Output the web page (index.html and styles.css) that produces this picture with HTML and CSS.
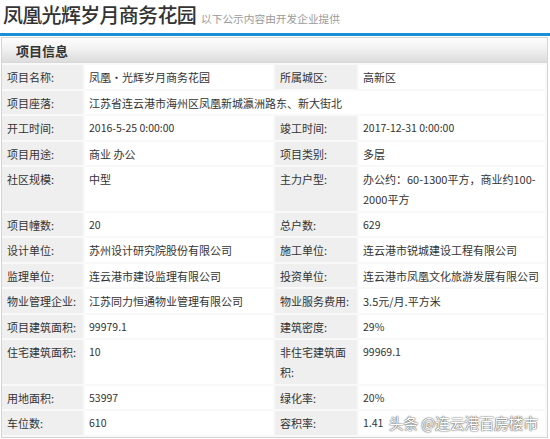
FILE: index.html
```html
<!DOCTYPE html>
<html lang="zh-CN">
<head>
<meta charset="utf-8">
<title>凤凰光辉岁月商务花园</title>
<link rel="stylesheet" href="styles.css">
</head>
<body>
<div class="page">
  <div class="title-bar">
    <h1 class="title">凤凰光辉岁月商务花园</h1>
    <span class="subtitle">以下公示内容由开发企业提供</span>
  </div>
  <div class="rule"></div>
  <div class="panel">
    <div class="panel-head">项目信息</div>
    <div class="grid">
      <div class="lbl">项目名称:</div><div class="val">凤凰・光辉岁月商务花园</div>
      <div class="lbl">所属城区:</div><div class="val">高新区</div>

      <div class="lbl">项目座落:</div><div class="val span3">江苏省连云港市海州区凤凰新城瀛洲路东、新大街北</div>

      <div class="lbl">开工时间:</div><div class="val num">2016-5-25 0:00:00</div>
      <div class="lbl">竣工时间:</div><div class="val num">2017-12-31 0:00:00</div>

      <div class="lbl">项目用途:</div><div class="val">商业 办公</div>
      <div class="lbl">项目类别:</div><div class="val">多层</div>

      <div class="lbl">社区规模:</div><div class="val">中型</div>
      <div class="lbl">主力户型:</div><div class="val">办公约：60-1300平方，商业约100-<br>2000平方</div>

      <div class="lbl">项目幢数:</div><div class="val num">20</div>
      <div class="lbl">总户数:</div><div class="val num">629</div>

      <div class="lbl">设计单位:</div><div class="val">苏州设计研究院股份有限公司</div>
      <div class="lbl">施工单位:</div><div class="val">连云港市锐城建设工程有限公司</div>

      <div class="lbl">监理单位:</div><div class="val">连云港市建设监理有限公司</div>
      <div class="lbl">投资单位:</div><div class="val">连云港市凤凰文化旅游发展有限公司</div>

      <div class="lbl">物业管理企业:</div><div class="val">江苏同力恒通物业管理有限公司</div>
      <div class="lbl">物业服务费用:</div><div class="val">3.5元/月.平方米</div>

      <div class="lbl">项目建筑面积:</div><div class="val num">99979.1</div>
      <div class="lbl">建筑密度:</div><div class="val num">29%</div>

      <div class="lbl">住宅建筑面积:</div><div class="val num">10</div>
      <div class="lbl">非住宅建筑面积:</div><div class="val num">99969.1</div>

      <div class="lbl">用地面积:</div><div class="val num">53997</div>
      <div class="lbl">绿化率:</div><div class="val num">20%</div>

      <div class="lbl">车位数:</div><div class="val num">610</div>
      <div class="lbl">容积率:</div><div class="val num">1.41</div>
    </div>
  </div>
  <div class="watermark">头条 @连云港百房楼市</div>
</div>
</body>
</html>
```
FILE: styles.css
```css
html, body {
  margin: 0;
  padding: 0;
  background: #ffffff;
}

.page {
  position: relative;
  width: 550px;
  height: 439px;
  overflow: hidden;
  font-family: "Noto Sans CJK SC", "Noto Sans", sans-serif;
  color: #333333;
}

.title-bar {
  display: flex;
  align-items: baseline;
  height: 33px;
  padding-left: 3px;
  box-sizing: border-box;
}

.title {
  margin: 0;
  font-size: 20px;
  line-height: 30px;
  font-weight: 500;
  color: #333333;
  letter-spacing: -0.7px;
}

.subtitle {
  margin-left: 5px;
  font-size: 10.7px;
  color: #9a9a9a;
}

.rule {
  height: 3px;
  background: #1a8fd6;
  margin-bottom: 1px;
}

.panel {
  margin-left: 1px;
  width: 547px;
  box-sizing: border-box;
  border: 1px solid #d4d4d4;
  background: #f9f9f9;
}

.panel-head {
  height: 25px;
  line-height: 25px;
  padding-left: 14px;
  font-size: 13px;
  font-weight: 700;
  color: #333333;
  background: linear-gradient(#fdfdfd, #f1f1f1 45%, #dcdcdc);
  border-bottom: 1px solid #d8d8d8;
  box-sizing: border-box;
}

.grid {
  display: grid;
  grid-template-columns: 81px 188px 82px 1fr;
  gap: 2px;
  padding: 2px 2px 2px 0;
}

.lbl, .val {
  font-size: 11px;
  line-height: 20px;
  padding: 2px 0 1.5px 5px;
  min-height: 20px;
}

.lbl {
  background: #efefef;
  color: #333333;
}

.val {
  background: #ffffff;
  padding-left: 4px;
  color: #333333;
}

.num {
  font-size: 10.5px;
}

.span3 {
  grid-column: span 3;
}

.watermark {
  position: absolute;
  right: 12px;
  bottom: 6px;
  font-size: 15px;
  line-height: 20px;
  color: #ffffff;
  text-shadow: 0 0 2px rgba(0, 0, 0, 0.6), 0 0 1px rgba(0, 0, 0, 0.8);
  letter-spacing: -0.3px;
}
```
